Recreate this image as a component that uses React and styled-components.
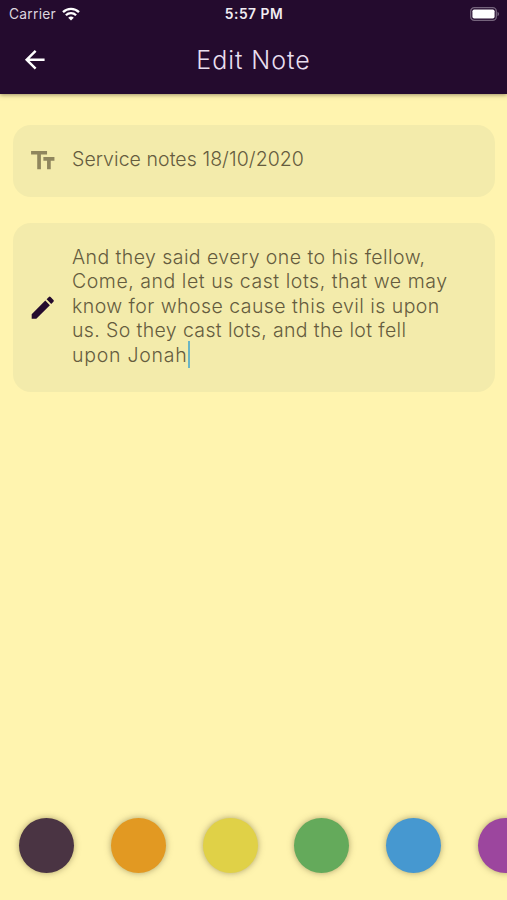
import React, {useState} from "react";
import styled, { createGlobalStyle } from 'styled-components'
import { MdArrowBack, MdEdit, MdTextFields } from "react-icons/md"

const GlobalStyle = createGlobalStyle`
    * {
        box-sizing: border-box;
    }
    body {
        margin: 0;
        overflow: hidden;
    }
`

const Screen = styled.div`
    display: flex;
    flex-direction: column;
    width: 507px;
    height: 900px;
    overflow: hidden;
    background: ${props => props.$color};
    font-family: Inter, "Liberation Sans", sans-serif;
`

const Header = styled.header`
    height: 94px;
    flex-shrink: 0;
    background: #240b2e;
    color: white;
    box-shadow: 0 1px 4px rgba(60, 45, 30, 0.5);
`

const StatusBar = styled.div`
    display: grid;
    grid-template-columns: 1fr auto 1fr;
    align-items: center;
    height: 27px;
    padding: 0 8px 0 9px;
`

const Carrier = styled.div`
    display: flex;
    align-items: center;
    gap: 6px;
    font-size: 13.8px;
    letter-spacing: 0.25px;
    color: #dcd5df;
`

const Clock = styled.div`
    font-size: 13.8px;
    font-weight: 600;
    letter-spacing: 0.5px;
    color: #f1edf3;
`

const Battery = styled.svg`
    justify-self: end;
`

const NavBar = styled.div`
    display: grid;
    grid-template-columns: 70px 1fr 70px;
    align-items: center;
    height: 66px;
`

const BackButton = styled.button`
    display: flex;
    justify-content: center;
    padding: 0;
    border: 0;
    background: transparent;
    color: white;
`

const Title = styled.h1`
    margin: 0;
    text-align: center;
    font-size: 25px;
    font-weight: 300;
    letter-spacing: 0.95px;
    color: #e9dfee;
`

const Fields = styled.main`
    display: flex;
    flex-direction: column;
    flex: 1;
    gap: 26px;
    padding: 30.5px 12.5px 0 13px;
`

const Field = styled.label`
    display: flex;
    align-items: center;
    height: ${props => props.$height}px;
    padding-left: 14.5px;
    gap: 15px;
    border-radius: 18px;
    background: #f3ebab;
    color: ${props => props.$iconColor};
`

const FieldText = styled.div`
    padding-bottom: 2.6px;
    font-size: 19.5px;
    font-weight: 300;
    line-height: 24.4px;
    color: #655c3e;
    white-space: nowrap;
`

const Line = styled.div`
    display: flex;
    align-items: center;
    letter-spacing: ${props => props.$spacing}px;
`

const Caret = styled.span`
    width: 2px;
    height: 27px;
    margin: -2px 0;
    background: #6bb5c4;
`

const Palette = styled.footer`
    display: flex;
    gap: 36.65px;
    height: 82px;
    padding-left: 19.4px;
    flex-shrink: 0;
`

const Swatch = styled.button`
    width: 55px;
    height: 55px;
    flex-shrink: 0;
    padding: 0;
    border: 0;
    border-radius: 50%;
    background: ${props => props.$color};
    box-shadow: 0 0 6px rgba(90, 80, 40, 0.5);
`

const colors = ["#4a3443", "#e29922", "#e0d147", "#64aa5b", "#4698d0", "#9c469e"]

const noteLines = [
    { text: "And they said every one to his fellow,", spacing: 0.43 },
    { text: "Come, and let us cast lots, that we may", spacing: 0.54 },
    { text: "know for whose cause this evil is upon", spacing: 0.45 },
    { text: "us. So they cast lots, and the lot fell", spacing: 0.37 },
    { text: "upon Jonah", spacing: 0.75 },
]

function WifiIcon() {
    return (
        <svg width="18" height="14" viewBox="0 0 18 14" fill="none" stroke="#fff" strokeWidth="2.3">
            <path d="M1 5.1a11.4 11.4 0 0 1 16 0" />
            <path d="M3.9 8.2a7.2 7.2 0 0 1 10.2 0" />
            <path d="M9 13.6 6.2 10.8a4 4 0 0 1 5.6 0z" fill="#fff" stroke="none" />
        </svg>
    )
}

function BatteryIcon() {
    return (
        <Battery width="29" height="14" viewBox="0 0 29 14">
            <rect x="0.7" y="0.7" width="25.6" height="12.6" rx="3.6" fill="none" stroke="#75647c" strokeWidth="1.3" />
            <rect x="2.4" y="2.4" width="22.2" height="9.2" rx="1.8" fill="#fff" />
            <path d="M27.5 4.8c2 .8 2 3.6 0 4.4z" fill="#75647c" />
        </Battery>
    )
}

function App() {
    const [color, setColor] = useState("#fff4af")

    return (
        <>
        <GlobalStyle />
        <Screen $color={color}>
            <Header>
                <StatusBar>
                    <Carrier>Carrier <WifiIcon /></Carrier>
                    <Clock>5:57 PM</Clock>
                    <BatteryIcon />
                </StatusBar>
                <NavBar>
                    <BackButton aria-label="Back"><MdArrowBack size={29.5} /></BackButton>
                    <Title>Edit Note</Title>
                </NavBar>
            </Header>
            <Fields>
                <Field $height={72} $iconColor="#8f865d">
                    <MdTextFields size={29.5} />
                    <FieldText>
                        <Line $spacing={0.06}>Service notes 18/10/2020</Line>
                    </FieldText>
                </Field>
                <Field $height={169.5} $iconColor="#240b2e">
                    <MdEdit size={29.5} />
                    <FieldText>
                        {noteLines.map((line, i) => (
                            <Line key={line.text} $spacing={line.spacing}>
                                {line.text}
                                {i === noteLines.length - 1 && <Caret />}
                            </Line>
                        ))}
                    </FieldText>
                </Field>
            </Fields>
            <Palette>
                {colors.map((c) => (
                    <Swatch key={c} $color={c} onClick={() => setColor(c)} />
                ))}
            </Palette>
        </Screen>
        </>
    )
}

export default App
